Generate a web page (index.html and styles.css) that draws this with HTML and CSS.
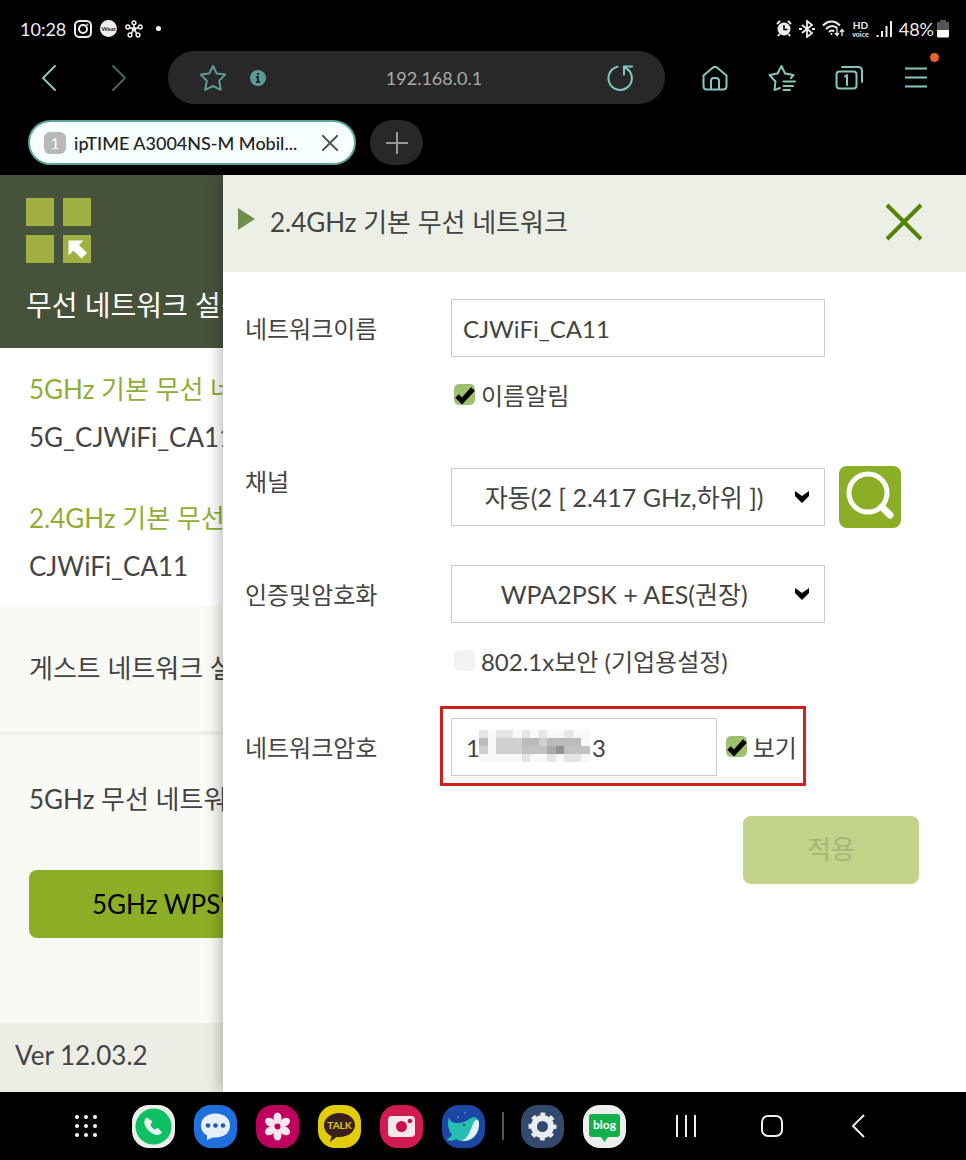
FILE: index.html
```html
<!DOCTYPE html>
<html lang="ko">
<head>
  <meta charset="UTF-8">
  <meta name="viewport" content="width=device-width, initial-scale=1.0">
  <title>ipTIME A3004NS-M Mobile</title>
  <link rel="stylesheet" href="styles.css">
</head>
<body>
  <!-- Barra de estado -->
  <div class="status">
    <div class="status-group">
      <span class="clock">10:28</span>
      <svg width="18" height="18" viewBox="0 0 18 18" fill="none" stroke="#eee" stroke-width="2"><rect x="1" y="1" width="16" height="16" rx="4.500"/><circle cx="9" cy="9" r="4"/><circle cx="13.300" cy="4.700" r=".6" stroke-width="1"/></svg>
      <span class="wear">Wear</span>
      <svg width="18" height="18" viewBox="0 0 18 18" fill="none" stroke="#eee" stroke-width="1.500"><path d="M9 9V4M9 9L4 7.500M9 9l5-1.500M9 9l-3 5M9 9l3 5"/><g fill="#000"><circle cx="9" cy="2.800" r="1.900"/><circle cx="2.800" cy="7" r="1.900"/><circle cx="15.200" cy="7" r="1.900"/><circle cx="5" cy="15" r="1.900"/><circle cx="13" cy="15" r="1.900"/></g><circle cx="9" cy="9" r="1.500" fill="#eee"/></svg>
      <span class="dot"></span>
    </div>
    <div class="status-group right">
      <svg width="16" height="17" viewBox="0 0 16 17"><circle cx="8" cy="9" r="6.500" fill="#eee"/><path d="M1 4l3-3M15 4l-3-3M3.500 14L2 16M12.500 14l1.500 2" stroke="#eee" stroke-width="2"/><path d="M8 5v4.500h3.500" fill="none" stroke="#000" stroke-width="1.500"/></svg>
      <svg width="16" height="18" viewBox="0 0 16 18" fill="none" stroke="#eee" stroke-width="1.800"><path d="M3 5l10 8-5 4V1l5 4-10 8"/><path d="M0 9h3M13 9h3" stroke-width="2"/></svg>
      <svg width="23" height="17" viewBox="0 0 23 17" fill="none" stroke="#eee" stroke-width="2"><path d="M1 5.500C6 0 13 0 18 5.500M4 9c4-4 8-4 11.500-.5M7 12c2-2 3.500-2 5-.5"/><circle cx="9.500" cy="14" r="1" fill="#eee" stroke="none"/><path d="M15 9v6M13 13l2 2.500 2-2.500M20 16v-6M18 12l2-2.500 2 2.500" stroke-width="1.300"/></svg>
      <span class="hd"><b>HD</b><small>voice</small></span>
      <svg width="16" height="16" viewBox="0 0 16 16" stroke="#eee" stroke-width="2"><path d="M1.500 16v-2M6 16v-6M10.500 16V5M15 16V0"/></svg>
      <span class="battery-text">48%</span>
      <svg width="12" height="18" viewBox="0 0 12 18"><path d="M3 0h6v2h3v8H0V2h3z" fill="#555"/><path d="M0 10h12v6a1.500 1.500 0 0 1-1.500 1.500h-9A1.500 1.500 0 0 1 0 16z" fill="#fff"/></svg>
    </div>
  </div>

  <!-- Barra del navegador -->
  <div class="toolbar">
    <button class="tool" aria-label="뒤로"><svg width="16" height="28" viewBox="0 0 16 28"><path d="M14 2L2 14l12 12"/></svg></button>
    <button class="tool faded" aria-label="앞으로"><svg width="16" height="28" viewBox="0 0 16 28"><path d="M2 2l12 12L2 26"/></svg></button>
    <div class="address">
      <button class="tool small" aria-label="즐겨찾기"><svg width="28" height="28" viewBox="0 0 28 28"><path d="M14 2l3.800 7.600 8.400 1-6 6 1.600 9.200L14 22l-7.800 3.800L7.800 16.600l-6-6 8.400-1z"/></svg></button>
      <svg class="info" width="16" height="16" viewBox="0 0 16 16"><circle cx="8" cy="8" r="8" fill="#5b9a92"/><path d="M8 3v2M6 7h2v5M6 12h4" stroke="#282828" stroke-width="2" fill="none"/></svg>
      <input class="url" type="text" aria-label="주소" value="192.168.0.1">
      <button class="tool small bright" aria-label="새로고침"><svg width="28" height="28" viewBox="0 0 28 28"><path d="M11.500 2.800A11.700 11.700 0 1 0 22 5.500"/><path d="M26 2.500h-8v8M18 2.500l5 4"/></svg></button>
    </div>
    <button class="tool" aria-label="홈"><svg width="26" height="28" viewBox="0 0 26 28"><path d="M1.500 11.500L11 3.500q2-1.500 4 0l9.500 8V22q0 3.500-3.500 3.500H5Q1.500 25.500 1.500 22zM9 25v-8q0-3 3-3h2q3 0 3 3v8"/></svg></button>
    <button class="tool" aria-label="북마크"><svg width="28" height="28" viewBox="0 0 28 28"><path d="M12 24l-5.500 2 1-8.500-6-6.500 8-1.500L13.500 2l3.500 7.500 8.500 1.500-2.500 3M15.500 17.500H27M15.500 22H25M15.500 26H22"/></svg></button>
    <button class="tool" aria-label="탭"><svg width="28" height="28" viewBox="0 0 28 28"><rect x="1.500" y="7.500" width="20" height="17" rx="3"/><path d="M7 3h16q4 0 4 4v11M10 12.500l2-1.500v10" /></svg></button>
    <button class="tool menu" aria-label="메뉴"><svg width="22" height="28" viewBox="0 0 22 28"><path d="M0 4.500h22M0 13.500h22M0 22.500h22"/></svg><span class="badge"></span></button>
  </div>

  <!-- Pestañas -->
  <div class="tabs">
    <div class="tab">
      <span class="tab-num">1</span>
      <span class="tab-title">ipTIME A3004NS-M Mobil...</span>
      <button class="tab-close" aria-label="탭 닫기"><svg width="16" height="16" viewBox="0 0 16 16"><path d="M0 0l16 16M16 0L0 16" stroke="#555" stroke-width="2"/></svg></button>
    </div>
    <button class="tab-add" aria-label="새 탭"><svg width="22" height="22" viewBox="0 0 22 22"><path d="M11 0v22M0 11h22" stroke="#999" stroke-width="2"/></svg></button>
  </div>

  <!-- Contenido de la página -->
  <main class="page">
    <div class="sidebar">
      <div class="side-header">
        <svg width="65" height="65" viewBox="0 0 65 65"><path d="M0 0h28v28H0zM37 0h28v28H37zM0 37h28v28H0zM37 37h28v28H37z" fill="#a0b043"/><path d="M42.500 42.500h15l-4.500 4.500 8 8-5.500 5.500-8-8-5 5z" fill="#fff"/></svg>
        <h1>무선 네트워크 설정</h1>
      </div>
      <div class="networks">
        <div>
          <a href="#">5GHz 기본 무선 네트워크</a>
          <p>5G_CJWiFi_CA11</p>
        </div>
        <div>
          <a href="#">2.4GHz 기본 무선 네트워크</a>
          <p>CJWiFi_CA11</p>
        </div>
      </div>
      <div class="guest">게스트 네트워크 설정</div>
      <div class="wps">
        <p>5GHz 무선 네트워크</p>
        <button class="wps-btn">5GHz WPS연결</button>
      </div>
      <div class="version">Ver 12.03.2</div>
    </div>

    <section class="drawer">
      <header class="drawer-header">
        <svg class="arrow" width="17" height="22" viewBox="0 0 17 22"><path d="M0 0l17 11L0 22z" fill="#6f8f4a"/></svg>
        <h2>2.4GHz 기본 무선 네트워크</h2>
        <button class="close" aria-label="닫기"><svg width="38" height="38" viewBox="0 0 38 38"><path d="M2 2l34 34M36 2L2 36" stroke="#568203" stroke-width="4"/></svg></button>
      </header>
      <form class="form">
        <div class="row">
          <label class="name" for="ssid">네트워크이름</label>
          <div class="field">
            <input class="box" id="ssid" type="text" value="CJWiFi_CA11">
            <label class="check"><input type="checkbox" checked>이름알림</label>
          </div>
        </div>
        <div class="row channel">
          <label class="name" for="channel">채널</label>
          <div class="field line">
            <select class="box" id="channel"><option>자동(2 [ 2.417 GHz,하위 ])</option></select>
            <button class="search" type="button" aria-label="채널 검색"><svg width="62" height="62" viewBox="0 0 62 62" fill="none" stroke="#fff"><circle cx="29" cy="27" r="19" stroke-width="5"/><path d="M43 41l8 8" stroke-width="7" stroke-linecap="round"/></svg></button>
          </div>
        </div>
        <div class="row">
          <label class="name" for="auth">인증및암호화</label>
          <div class="field">
            <select class="box" id="auth"><option>WPA2PSK + AES(권장)</option></select>
            <label class="check"><input type="checkbox">802.1x보안 (기업용설정)</label>
          </div>
        </div>
        <div class="row">
          <label class="name" for="password">네트워크암호</label>
          <div class="field">
            <div class="highlight">
              <div class="password">
                <input class="box" id="password" type="text" value="17&nbsp;&nbsp;&nbsp;&nbsp;&nbsp;&nbsp;&nbsp;&nbsp;&nbsp;&nbsp;&nbsp;&nbsp;&nbsp;&nbsp;&nbsp;&nbsp;3">
                <svg class="mosaic" width="111" height="32" viewBox="0 0 13 4" preserveAspectRatio="none" shape-rendering="crispEdges">
                  <path d="M0 0h13v4H0z" fill="#f8f8f8"/>
                  <path d="M0 0h1v1H0zM2 0h2v1H2zM5 0h1v1H5zM7 0h1v1H7zM10 0h1v1h-1z" fill="#e6e6e6"/>
                  <path d="M0 1h1v1H0zM5 1h2v1H5zM8 1h4v1H8z" fill="#bbb"/>
                  <path d="M2 1h3v1H2zM7 1h1v1H7zM0 2h1v1H0zM2 2h3v1H2z" fill="#d0d0d0"/>
                  <path d="M5 2h3v1H5zM10 2h3v1h-3z" fill="#c2c2c2"/>
                  <path d="M8 2h1v1H8z" fill="#aaa"/><path d="M9 2h1v1H9z" fill="#929292"/>
                  <path d="M5 3h1v1H5zM8 3h1v1H8zM10 3h2v1h-2z" fill="#e4e4e4"/>
                </svg>
              </div>
              <label class="check"><input type="checkbox" checked>보기</label>
            </div>
          </div>
        </div>
        <button class="apply" type="submit" disabled>적용</button>
      </form>
    </section>
  </main>

  <!-- Barra inferior -->
  <nav class="dock">
    <button class="app grid" aria-label="모든 앱"><svg width="24" height="24" viewBox="0 0 24 24" fill="#fff"><circle cx="3" cy="3" r="2"/><circle cx="12" cy="3" r="2"/><circle cx="21" cy="3" r="2"/><circle cx="3" cy="12" r="2"/><circle cx="12" cy="12" r="2"/><circle cx="21" cy="12" r="2"/><circle cx="3" cy="21" r="2"/><circle cx="12" cy="21" r="2"/><circle cx="21" cy="21" r="2"/></svg></button>
    <button class="app phone" aria-label="전화"><svg width="43" height="43" viewBox="0 0 43 43"><circle cx="21.500" cy="21.500" r="18" fill="#0fbf63"/><path d="M15 12.500c-4 2-3.500 8 1.500 13s11 6 13.500 2l-4-4.500-3.500 1.500c-2-1-3.500-3-4-5l2-3z" fill="#eef5ee"/></svg></button>
    <button class="app message" aria-label="메시지"><svg width="43" height="43" viewBox="0 0 43 43"><path d="M21.500 8.500c9 0 14.500 5 14.500 12s-5.500 12-14.500 12h-3L13 35v-4.500C9 28 7 25 7 20.500c0-7 5.500-12 14.500-12z" fill="#e8eef8"/><g fill="#1a5bb8"><circle cx="14" cy="20.500" r="2.300"/><circle cx="21.500" cy="20.500" r="2.300"/><circle cx="29" cy="20.500" r="2.300"/></g></svg></button>
    <button class="app gallery" aria-label="갤러리"><svg width="43" height="43" viewBox="0 0 43 43" fill="#f5e6ef"><ellipse cx="21.500" cy="13" rx="4" ry="5.500"/><ellipse cx="21.500" cy="30" rx="4" ry="5.500"/><ellipse cx="21.500" cy="13" rx="4" ry="5.500" transform="rotate(60 21.500 21.500)"/><ellipse cx="21.500" cy="30" rx="4" ry="5.500" transform="rotate(60 21.500 21.500)"/><ellipse cx="21.500" cy="13" rx="4" ry="5.500" transform="rotate(120 21.500 21.500)"/><ellipse cx="21.500" cy="30" rx="4" ry="5.500" transform="rotate(120 21.500 21.500)"/><circle cx="21.500" cy="21.500" r="5"/><circle cx="21.500" cy="21.500" r="3" fill="#c0005f"/></svg></button>
    <button class="app talk" aria-label="카카오톡"><svg width="43" height="43" viewBox="0 0 43 43"><path d="M21.500 8C30 8 37 13 37 20s-7 12-15.500 12h-3L12 37l1.500-6C9 29 6 25 6 20 6 13 13 8 21.500 8z" fill="#3b1e1e"/><text x="21.500" y="24" text-anchor="middle" font-size="10" font-weight="bold" fill="#e2cc08">TALK</text></svg></button>
    <button class="app camera" aria-label="카메라"><svg width="43" height="43" viewBox="0 0 43 43"><rect x="8" y="11" width="27" height="21" rx="4" fill="#f7e6ea"/><circle cx="21.500" cy="21.500" r="5.500" fill="#c9104b"/><circle cx="30" cy="16" r="2.300" fill="#c9104b"/></svg></button>
    <button class="app whale" aria-label="웨일"><svg width="43" height="43" viewBox="0 0 43 43"><path d="M7 12c1 5 5 6 9 6 5 0 8-2 11-4 6-4 10-1 10 5 0 10-6 17-15 17-4 0-6-1-8-2-3 2-6 2-9 1l5-5C6 25 5 18 7 12z" fill="#26bfb4"/><path d="M19 36c7-2 9-10 12-17 2-5 6-6 6 0 0 10-7 18-18 17z" fill="#e4f2f2"/><circle cx="22" cy="20" r="1" fill="#123"/><circle cx="23" cy="8" r=".8" fill="#8fb4ff"/><circle cx="16" cy="12" r=".8" fill="#8fb4ff"/></svg></button>
    <span class="sep"></span>
    <button class="app settings" aria-label="설정"><svg width="43" height="43" viewBox="0 0 43 43"><circle cx="21.500" cy="21.500" r="8.500" fill="none" stroke="#e8ecf0" stroke-width="6"/><circle cx="21.500" cy="21.500" r="12" fill="none" stroke="#e8ecf0" stroke-width="4" stroke-dasharray="4.712 4.712" stroke-dashoffset="2.356"/></svg></button>
    <button class="app blog" aria-label="블로그"><svg width="43" height="43" viewBox="0 0 43 43"><path d="M9 9h25q3 0 3 3v17q0 3-3 3h-9l-3.500 5-3.500-5H9q-3 0-3-3V12q0-3 3-3z" fill="#12b04b"/><text x="21.500" y="24" text-anchor="middle" font-size="12" font-weight="bold" fill="#fff">blog</text></svg></button>
    <div class="nav-keys">
      <button class="app" aria-label="최근 앱"><svg width="22" height="22" viewBox="0 0 22 22" stroke="#eee" stroke-width="2"><path d="M2 0v22M11 0v22M20 0v22"/></svg></button>
      <button class="app" aria-label="홈 화면"><svg width="22" height="22" viewBox="0 0 22 22" fill="none" stroke="#eee" stroke-width="2"><rect x="1" y="1" width="20" height="20" rx="6"/></svg></button>
      <button class="app" aria-label="이전"><svg width="14" height="24" viewBox="0 0 14 24" fill="none" stroke="#eee" stroke-width="2"><path d="M13 1L2 12l11 11"/></svg></button>
    </div>
  </nav>
</body>
</html>
```
FILE: styles.css
```css
* {
  box-sizing: border-box;
}
body {
  margin: 0;
  min-height: 100vh;
  display: flex;
  flex-direction: column;
  background: #000;
  color: #444;
  font-family: Lato, "Noto Sans CJK KR", sans-serif;
  font-size: 26px;
}
button, input, select {
  font-family: inherit;
}
button {
  padding: 0;
  border: none;
  background: none;
  cursor: pointer;
}
svg {
  display: block;
  flex: none;
}
h1, h2, p {
  margin: 0;
  font-weight: normal;
}

/* Barra de estado */
.status {
  display: flex;
  justify-content: space-between;
  height: 51px;
  padding: 6px 17px 0 20px;
  color: #eee;
}
.status-group {
  display: flex;
  align-items: center;
  gap: 8px;
}
.clock, .battery-text {
  font-size: 18px;
}
.battery-text {
  margin-right: -4px;
}
.wear {
  width: 17px;
  height: 17px;
  border-radius: 50%;
  background: #eee;
  color: #222;
  font-size: 6px;
  font-weight: bold;
  line-height: 17px;
  text-align: center;
}
.dot {
  width: 5px;
  height: 5px;
  margin-left: 5px;
  border-radius: 50%;
  background: #fff;
}
.status-group.right {
  gap: 7px;
}
.hd {
  display: flex;
  flex-direction: column;
  align-items: center;
  font-size: 10px;
  line-height: 10px;
}
.hd small {
  font-size: 7px;
  font-weight: bold;
  line-height: 8px;
}

/* Barra del navegador */
.toolbar {
  display: flex;
  align-items: center;
  gap: 23px;
  padding: 0 28px 0 27px;
}
.tool {
  display: flex;
  align-items: center;
  justify-content: center;
  position: relative;
  flex: none;
  width: 44px;
  height: 44px;
}
.tool path, .tool rect {
  fill: none;
  stroke: #85c7be;
  stroke-width: 2;
  stroke-linejoin: round;
  stroke-linecap: round;
}
.tool.faded {
  margin-left: 3px;
}
.tool.faded path {
  stroke: #47665f;
}
.address {
  display: flex;
  align-items: center;
  flex: 1;
  min-width: 0;
  height: 53px;
  margin: 0 5px 0 4px;
  padding: 0 23px;
  border-radius: 27px;
  background: #282828;
}
.tool.small path {
  stroke: #5f9c94;
}
.tool.bright path {
  stroke: #85c7be;
}
.info {
  margin-left: 15px;
}
.url {
  flex: 1;
  min-width: 0;
  padding: 0 0 0 4px;
  border: none;
  background: none;
  color: #aaa;
  font-size: 18px;
  text-align: center;
}
.badge {
  position: absolute;
  top: -3px;
  right: -1px;
  width: 9px;
  height: 9px;
  border-radius: 50%;
  background: #e8632c;
}

/* Pestañas */
.tabs {
  display: flex;
  gap: 14px;
  padding: 16px 28px 10px;
}
.tab {
  display: flex;
  align-items: center;
  width: 328px;
  height: 45px;
  padding: 0 16px 0 14px;
  border: 2px solid #5ba59a;
  border-radius: 23px;
  background: #f7fefe;
}
.tab-num {
  width: 22px;
  height: 22px;
  border-radius: 6px;
  background: #b8b8b8;
  color: #fff;
  font-size: 15px;
  line-height: 22px;
  text-align: center;
}
.tab-title {
  flex: 1;
  margin-left: 8px;
  overflow: hidden;
  color: #222;
  font-size: 18px;
  font-weight: 500;
  white-space: nowrap;
}
.tab-add {
  display: flex;
  align-items: center;
  justify-content: center;
  width: 53px;
  height: 45px;
  border-radius: 23px;
  background: #282828;
}

/* Página */
.page {
  display: grid;
  grid-template-columns: 3fr 10fr;
  flex: 1;
  background: #fff;
}
.sidebar {
  display: flex;
  flex-direction: column;
  min-width: 0;
  overflow: hidden;
  white-space: nowrap;
}
.side-header {
  height: 173px;
  padding: 23px 25px 0 26px;
  background: #47523b;
  color: #fff;
}
.side-header h1 {
  margin-top: 18px;
  font-size: 28px;
  line-height: 48px;
}
.networks {
  display: flex;
  flex-direction: column;
  gap: 33px;
  padding: 17px 29px 16px;
  line-height: 48px;
}
.networks a {
  color: #8fae33;
  text-decoration: none;
}
.guest {
  padding: 0 29px;
  border-bottom: 4px solid #eeefe8;
  background: #f9faf5;
  line-height: 125px;
}
.wps {
  flex: 1;
  padding: 0 29px;
  background: #f9faf5;
  line-height: 128px;
}
.wps-btn {
  display: block;
  height: 68px;
  margin-top: 7px;
  padding: 0 63px 4px;
  border-radius: 8px;
  background: #8cae27;
  color: #000;
  font-size: 26px;
}
.version {
  padding: 0 15px 5px;
  background: #ecede4;
  line-height: 64px;
}

/* Panel lateral abierto */
.drawer {
  position: relative;
  min-width: 0;
  background: #fff;
  box-shadow: -2px 0 14px rgba(0, 0, 0, 0.3);
  clip-path: inset(0 0 0 -20px);
}
.drawer-header {
  display: flex;
  align-items: center;
  height: 97px;
  padding: 0 43px 4px 15px;
  background: #ecefe5;
}
.arrow {
  margin-bottom: 6px;
}
.drawer-header h2 {
  flex: 1;
  margin-left: 15px;
  font-size: 26px;
  line-height: 48px;
}
.form {
  display: flex;
  flex-direction: column;
  gap: 28px;
  padding: 27px 47px 0 22px;
  font-size: 24px;
}
.row {
  display: grid;
  grid-template-columns: 206px 1fr;
}
.name {
  line-height: 60px;
}
.channel {
  padding-bottom: 9px;
}
.line {
  display: flex;
  align-items: center;
  gap: 14px;
  padding-top: 14px;
}
.box {
  display: block;
  width: 80%;
  height: 58px;
  padding: 0 11px;
  border: 1px solid #ccc;
  border-radius: 0;
  background: #fff;
  color: #444;
  font-size: 24px;
}
select.box {
  appearance: none;
  padding: 0 40px 0 12px;
  background: #fff url("data:image/svg+xml,%3Csvg xmlns='http://www.w3.org/2000/svg' width='14' height='12'%3E%3Cpath d='M0 0l7 5 7-5v5l-7 7-7-7z'/%3E%3C/svg%3E") no-repeat right 15px center;
  font-size: 25px;
  text-align-last: center;
}
.search {
  flex: none;
  border-radius: 8px;
  background: #8cae27;
}
.check {
  display: flex;
  align-items: center;
  gap: 6px;
  height: 56px;
  margin: 9px 0 2px;
  padding-left: 3px;
}
.check input {
  appearance: none;
  flex: none;
  width: 21px;
  height: 21px;
  margin: 0;
  border-radius: 5px;
  background: #f2f2f2;
}
.check input:checked {
  background: #9cc06c url("data:image/svg+xml,%3Csvg xmlns='http://www.w3.org/2000/svg' width='21' height='21'%3E%3Cpath d='M3 12l5 5L19 5' fill='none' stroke='%23000' stroke-width='5'/%3E%3C/svg%3E");
}
.highlight {
  display: flex;
  width: 366px;
  margin: -12px 0 -10px -11px;
  padding: 9px 6px 7px 8px;
  border: 3px solid #d2201f;
}
.password {
  position: relative;
  flex: 1;
}
.password .box {
  width: 100%;
  padding-left: 14px;
}
.mosaic {
  position: absolute;
  top: 12px;
  left: 28px;
}
.highlight .check {
  margin: 0;
  padding-left: 9px;
}
.apply {
  align-self: flex-end;
  width: 176px;
  height: 68px;
  margin-top: 10px;
  padding-bottom: 6px;
  border-radius: 8px;
  background: #c2d38a;
  color: #a5b677;
  font-size: 26px;
}

/* Barra inferior */
.dock {
  display: flex;
  align-items: center;
  gap: 19px;
  height: 68px;
  padding: 0 64px;
}
.app {
  display: flex;
  align-items: center;
  justify-content: center;
  flex: none;
  width: 43px;
  height: 43px;
  border-radius: 17px;
}
.grid {
  margin-right: 6px;
}
.phone, .blog {
  background: #ecefec;
}
.message {
  background: #1f6fdc;
}
.gallery {
  background: #c0005f;
}
.talk {
  background: #e2cc08;
}
.camera {
  background: #d11a4f;
}
.whale {
  background: #1d47a4;
}
.settings {
  background: #34496e;
}
.sep {
  width: 2px;
  height: 28px;
  margin: 0 -2px;
  background: #555;
}
.nav-keys {
  display: flex;
  gap: 43px;
  margin-left: 19px;
}
```
